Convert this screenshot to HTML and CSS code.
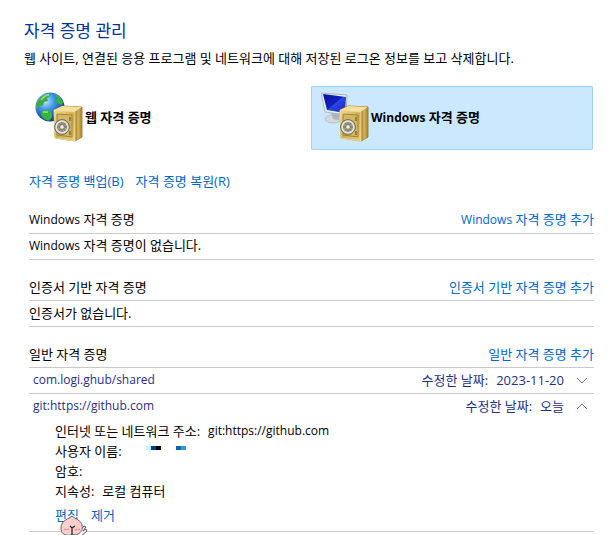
FILE: index.html
```html
<!DOCTYPE html>
<html lang="ko">
<head>
<meta charset="utf-8">
<title>자격 증명 관리</title>
<link rel="stylesheet" href="styles.css">
</head>
<body>
<svg class="defs" width="0" height="0" aria-hidden="true">
  <defs>
    <linearGradient id="gold" x1="0" y1="0" x2="1" y2="1"><stop offset="0" stop-color="#f3df92"/><stop offset=".5" stop-color="#cfad50"/><stop offset="1" stop-color="#e8ce78"/></linearGradient>
    <linearGradient id="goldSide" x1="0" y1="0" x2="1" y2="0"><stop offset="0" stop-color="#9c7929"/><stop offset=".45" stop-color="#d6b65b"/><stop offset="1" stop-color="#a37d28"/></linearGradient>
    <radialGradient id="sea" cx=".35" cy=".3" r=".75"><stop offset="0" stop-color="#b4e7ff"/><stop offset=".4" stop-color="#3d96e4"/><stop offset="1" stop-color="#0a3192"/></radialGradient>
    <linearGradient id="screen" x1="0" y1="0" x2="1" y2="1"><stop offset="0" stop-color="#0712a0"/><stop offset=".5" stop-color="#1020c4"/><stop offset=".52" stop-color="#2c48dc"/><stop offset="1" stop-color="#1527c4"/></linearGradient>
    <g id="safe">
      <path d="M19 18 27 14 47 15 47 45 40 49 20 46Z" fill="#b28c35" stroke="#8e6c22" stroke-width=".8"/>
      <path d="M19 18 27 14 47 15 40 20Z" fill="#f3e19d"/>
      <path d="M40 20 47 15 47 45 40 49Z" fill="url(#goldSide)"/>
      <path d="M19 18 40 20 40 49 20 46Z" fill="url(#gold)" stroke="#fae9a9" stroke-width=".7"/>
      <path d="M22 22 37 23 37 45 22 43Z" fill="#d4b661" stroke="#957633" stroke-width=".8"/>
      <path d="M35 25v4M35 39v4" stroke="#806522" stroke-width="1.4"/>
      <circle cx="27" cy="35" r="7.4" fill="#a89b74" stroke="#706b5d"/>
      <circle cx="27" cy="35" r="5.9" fill="none" stroke="#e2e4e4" stroke-width="1.6"/>
      <path d="M27 30v10M22 35h10M24 31l6 8M30 31l-6 8" stroke="#77766f" stroke-width="1"/>
      <circle cx="27" cy="35" r="2.2" fill="#f1f1eb" stroke="#79766c" stroke-width=".7"/>
    </g>
  </defs>
</svg>
<main class="page">
  <h1 class="title">자격 증명 관리</h1>
  <p class="intro">웹 사이트, 연결된 응용 프로그램 및 네트워크에 대해 저장된 로그온 정보를 보고 삭제합니다.</p>

  <div class="content">
    <div class="vaults">
      <button class="vault" type="button">
        <svg class="vault-icon" viewBox="0 0 48 50" aria-hidden="true">
          <circle cx="15" cy="15" r="14.5" fill="url(#sea)"/>
          <path d="M5 6C8 3 12 2 14 2l1 2-3 2 1 3-4 1-1 3-3 1-2 3-2-2c0-3 2-6 4-9Z" fill="#42a844"/>
          <path d="M20 2c4 2 7 5 8 9l-2 2-4-2-1-3 1-2ZM7 19l6-1 4 3 0 4-3 4-5-2-3-4Z" fill="#36b538"/>
          <path d="M6 8c3-4 5-5 8-5M8 20l5 0" stroke="#a4df75" stroke-width="1.3" fill="none"/>
          <use href="#safe"/>
        </svg>
        <span>웹 자격 증명</span>
      </button>
      <button class="vault selected" type="button" aria-pressed="true">
        <svg class="vault-icon" viewBox="0 0 48 50" aria-hidden="true">
          <ellipse cx="12" cy="27" rx="8" ry="4" fill="#d3d8dc" stroke="#a7afb6" stroke-width=".6"/>
          <path d="M10 20l8 2v6l-6-1Z" fill="#aeb5bc"/>
          <path d="M0 1 26 3 25 23 4 20Z" fill="#e9edf0" stroke="#9aa9b7" stroke-width=".8"/>
          <path d="M2 2 25 5 24 21 6 18Z" fill="url(#screen)"/>
          <use href="#safe"/>
        </svg>
        <span><span class="latin">Windows</span> 자격 증명</span>
      </button>
    </div>

    <nav class="tools">
      <a href="#backup">자격 증명 백업(B)</a>
      <a href="#restore">자격 증명 복원(R)</a>
    </nav>

    <section class="group">
      <header class="row"><h2><span class="latin">Windows</span> 자격 증명</h2><a href="#add-windows"><span class="latin">Windows</span> 자격 증명 추가</a></header>
      <p class="row"><span><span class="latin">Windows</span> 자격 증명이 없습니다.</span></p>
    </section>

    <section class="group">
      <header class="row"><h2>인증서 기반 자격 증명</h2><a href="#add-cert">인증서 기반 자격 증명 추가</a></header>
      <p class="row">인증서가 없습니다.</p>
    </section>

    <section class="group">
      <header class="row"><h2>일반 자격 증명</h2><a href="#add-generic">일반 자격 증명 추가</a></header>
      <button class="row entry" type="button" aria-expanded="false">
        <span class="name latin">com.logi.ghub/shared</span>
        <span class="label">수정한 날짜:</span><span>2023-11-20</span>
        <svg class="chevron" viewBox="0 0 12 12" aria-hidden="true"><path d="M1 4l5 5 5-5"/></svg>
      </button>
      <div class="item">
        <button class="row entry" type="button" aria-expanded="true">
          <span class="name latin">git:https://github.com</span>
          <span class="label">수정한 날짜:</span><span>오늘</span>
          <svg class="chevron" viewBox="0 0 12 12" aria-hidden="true"><path d="M1 9l5-5 5 5"/></svg>
        </button>
        <dl class="details">
          <div><dt>인터넷 또는 네트워크 주소:</dt><dd class="latin">git:https://github.com</dd></div>
          <div><dt>사용자 이름:</dt><dd>
            <svg class="masked" viewBox="0 0 40 4" shape-rendering="crispEdges" aria-hidden="true"><path fill="#b6ffff" d="M0 0h5v4H0z"/><path fill="#003a90" d="M5 0h5v4H5z"/><path d="M10 0h5v4h-5z"/><path fill="#ffffdb" d="M15 0h5v4h-5z"/><path fill="#0066b6" d="M30 0h5v4h-5z"/><path fill="#3a90db" d="M35 0h5v4h-5z"/></svg>
          </dd></div>
          <div><dt>암호:</dt><dd></dd></div>
          <div><dt>지속성:</dt><dd>로컬 컴퓨터</dd></div>
        </dl>
        <div class="actions">
          <a href="#edit">편집</a>
          <a href="#remove">제거</a>
          <svg class="pointer" viewBox="0 0 28 21" aria-hidden="true">
            <path d="M19 17 24 11l2 1-3 4 3-2 1 2-6 5" fill="#fff" stroke="#555" stroke-width="1"/>
            <path d="M12 1C9 4 1 5 1 13c0 5 3 7 6 7 3 1 4 0 5-1 2 1 4 1 6 0 4-2 5-5 4-9C21 5 15 4 12 1Z" fill="#f9cfd0" stroke="#666" stroke-width="1"/>
            <path d="M10 11l2 2 3-2M12 13v7" fill="none" stroke="#222" stroke-width="1.2"/>
            <path d="M4 15l2-1M7 15l2-1M15 15l2-1M18 15l2-1" stroke="#f47f82" stroke-width="1.2"/>
          </svg>
        </div>
      </div>
    </section>
  </div>
</main>
</body>
</html>
```
FILE: styles.css
```css
* { box-sizing: border-box; }
body {
  margin: 0;
  background: #fff;
  color: #000;
  font: 13px/20px "Open Sans", "Noto Sans CJK KR", sans-serif;
}
h1, h2, p, dl, dd { margin: 0; font-weight: 400; }
h2 { font-size: 13px; }
a { color: #0066cc; text-decoration: none; }
button { font: inherit; color: inherit; background: none; border: 0; padding: 0; text-align: left; }
.latin { font-size: 12px; }
.defs { position: absolute; }
.page { min-height: 100vh; padding: 18px 22px 0 24px; overflow: hidden; }
.title { font-size: 17px; line-height: 26px; color: #003399; }
.intro { margin-top: 4px; }
.content { padding-left: 5px; }
.vaults { display: grid; grid-template-columns: 1fr 1fr; margin: 18px 1px 0 0; }
.vault {
  display: flex;
  align-items: center;
  gap: 2px;
  height: 64px;
  padding: 0 5px 2px;
  border: 1px solid transparent;
  border-radius: 1px;
  font-weight: 700;
}
.vault.selected { padding-left: 9px; background: #cce8ff; border-color: #99d1ff; }
.vault-icon { width: 48px; height: 50px; }
.tools { display: flex; gap: 12px; margin-top: 21px; }
.group { margin-top: 15px; }
.row {
  display: flex;
  align-items: center;
  height: 26px;
  padding-bottom: 2px;
  border-bottom: 1px solid #cacaca;
}
header.row { justify-content: space-between; }
.tools + .group { margin-top: 17px; }
.entry { width: 100%; padding: 0 6px 2px 4px; color: #1f3083; }
.name { flex: 1; }
.label { margin-right: 8px; }
.chevron { width: 12px; height: 12px; margin-left: 12px; fill: none; stroke: #777; }
.item { border-bottom: 1px solid #cacaca; }
.item .entry { height: 25px; border-bottom: 0; }
.details { padding: 2px 0 0 26px; }
.details div { display: flex; gap: 8px; }
.masked { display: block; width: 40px; height: 4px; margin: 5px 0 0 16px; }
.actions { position: relative; display: flex; gap: 12px; padding: 4px 0 6px 26px; }
.pointer { position: absolute; left: 31px; top: 14px; width: 28px; height: 21px; }
```
